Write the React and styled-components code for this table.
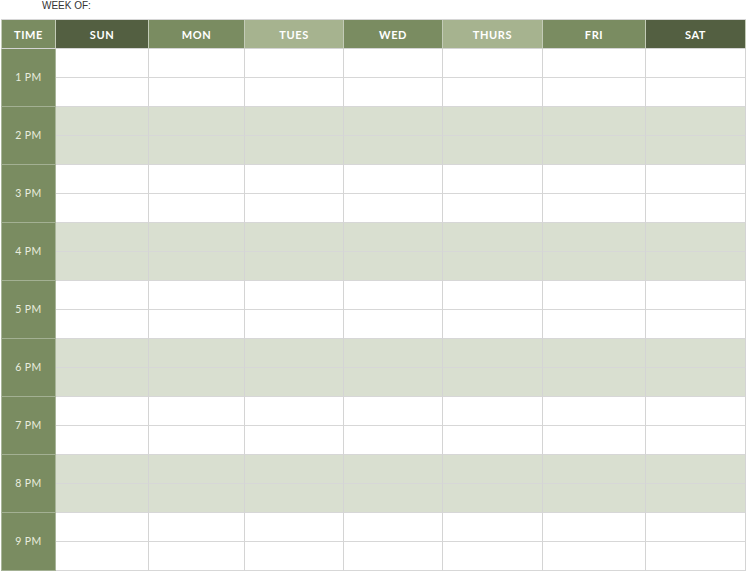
import React from 'react';
import styled, { createGlobalStyle } from 'styled-components';

const days = [
  { label: 'SUN', tone: 'dark' },
  { label: 'MON', tone: 'mid' },
  { label: 'TUES', tone: 'light' },
  { label: 'WED', tone: 'mid' },
  { label: 'THURS', tone: 'light' },
  { label: 'FRI', tone: 'mid' },
  { label: 'SAT', tone: 'dark' },
];

const hours = ['1 PM', '2 PM', '3 PM', '4 PM', '5 PM', '6 PM', '7 PM', '8 PM', '9 PM'];

const tones = {
  dark: '#535f41',
  mid: '#7a8c61',
  light: '#a6b38f',
};

const App = () => {
  return (
    <>
      <GlobalStyle />
      <Page>
        <WeekOf>WEEK OF:</WeekOf>
        <Schedule>
          <HeadCell $tone='mid'>TIME</HeadCell>
          {days.map((day) => (
            <HeadCell key={day.label} $tone={day.tone}>
              {day.label}
            </HeadCell>
          ))}
          {hours.map((hour, i) => (
            <React.Fragment key={hour}>
              <TimeCell>{hour}</TimeCell>
              {[0, 1].map((half) =>
                days.map((day) => (
                  <SlotCell key={`${hour}-${half}-${day.label}`} $shaded={i % 2 === 1} />
                ))
              )}
            </React.Fragment>
          ))}
        </Schedule>
      </Page>
    </>
  );
};

export default App;

const GlobalStyle = createGlobalStyle`
  body {
    margin: 0;
    background: #fff;
    font-family: Lato, "Liberation Sans", sans-serif;
  }
  * {
    box-sizing: border-box;
  }
`;

const Page = styled.div`
  width: 749px;
  height: 573px;
  padding-left: 1px;
`;

const WeekOf = styled.div`
  height: 19px;
  padding-left: 41px;
  font-family: "Liberation Sans", Arial, sans-serif;
  font-size: 10px;
  line-height: 11px;
  color: #333;
`;

const Schedule = styled.div`
  display: grid;
  grid-template-columns: 55px 93px 96px 99px 99px 100px 103px 100px;
  grid-auto-rows: 29px;
  width: 745px;
  border-top: 1px solid #d6d6d6;
`;

const HeadCell = styled.div`
  display: flex;
  align-items: center;
  justify-content: center;
  background: ${(props) => tones[props.$tone]};
  border-right: 1px solid #c3cbb7;
  border-bottom: 1px solid #d4d4d4;
  color: #fff;
  font-size: 11px;
  font-weight: 700;
  letter-spacing: 0.6px;
  &:first-child {
    border-left: 1px solid #c3cbb7;
  }
`;

const TimeCell = styled.div`
  grid-row: span 2;
  display: flex;
  align-items: center;
  justify-content: center;
  background: #7a8c61;
  border-left: 1px solid #a9b59a;
  border-right: 1px solid #a9b59a;
  border-bottom: 1px solid #a3b093;
  color: #e9eddf;
  font-size: 10.5px;
  letter-spacing: 0.4px;
  padding-bottom: 2px;
`;

const SlotCell = styled.div`
  background: ${(props) => (props.$shaded ? '#d9dfd0' : '#fff')};
  border-right: 1px solid #d4d4d4;
  border-bottom: 1px solid #d7d7d7;
`;
